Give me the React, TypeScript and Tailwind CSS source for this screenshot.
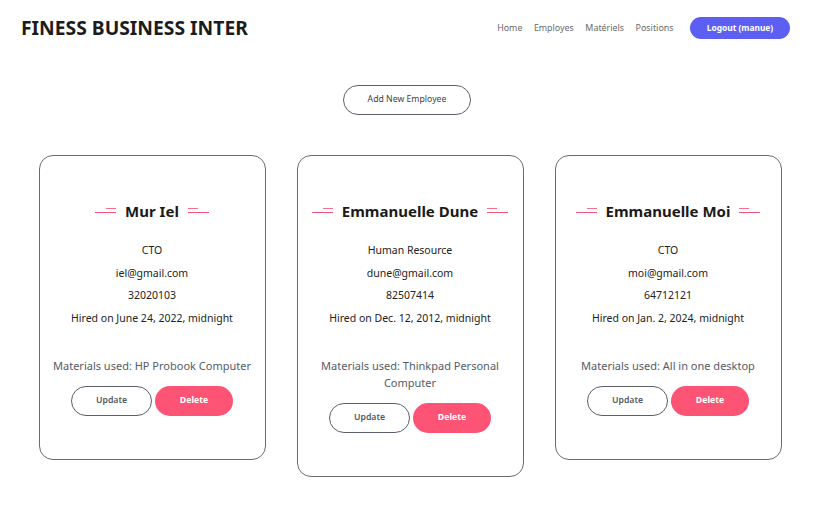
import React from "react";

type Employee = {
  name: string;
  position: string;
  email: string;
  phone: string;
  hired: string;
  materials: string;
};

const employees: Employee[] = [
  {
    name: "Mur Iel",
    position: "CTO",
    email: "iel@gmail.com",
    phone: "32020103",
    hired: "Hired on June 24, 2022, midnight",
    materials: "Materials used: HP Probook Computer",
  },
  {
    name: "Emmanuelle Dune",
    position: "Human Resource",
    email: "dune@gmail.com",
    phone: "82507414",
    hired: "Hired on Dec. 12, 2012, midnight",
    materials: "Materials used: Thinkpad Personal Computer",
  },
  {
    name: "Emmanuelle Moi",
    position: "CTO",
    email: "moi@gmail.com",
    phone: "64712121",
    hired: "Hired on Jan. 2, 2024, midnight",
    materials: "Materials used: All in one desktop",
  },
];

function Dash({ flip }: { flip?: boolean }) {
  // little double stroke next to the name
  return (
    <div className={`flex h-[6px] w-[21px] flex-col gap-[3px] ${flip ? "items-start" : "items-end"}`}>
      <span className="h-px w-[10px] bg-[#f5708c]" />
      <span className="h-px w-[21px] bg-[#f0547a]" />
    </div>
  );
}

function EmployeeCard({ e }: { e: Employee }) {
  return (
    <div className="flex w-[227px] flex-col items-center rounded-[14px] border border-[#6b6b6b] px-[12px] pt-[45px] pb-[43px] text-center">
      <div className="flex h-[20px] items-center gap-[9px]">
        <Dash />
        <h2 className="text-[15px] leading-[20px] font-bold text-[#1a1a1a]">{e.name}</h2>
        <Dash flip />
      </div>
      <div className="mt-[18px] flex flex-col text-[10.5px] leading-[22.5px] text-[#222]">
        <p>{e.position}</p>
        <p>{e.email}</p>
        <p>{e.phone}</p>
        <p>{e.hired}</p>
      </div>
      <p className="mt-[28px] text-[11px] leading-[17px] text-[#555b66]">{e.materials}</p>
      <div className="mt-[12px] flex gap-[3px]">
        <button className="h-[30px] w-[81px] rounded-full border border-[#5a5f69] text-[8.7px] font-semibold text-[#555b66]">
          Update
        </button>
        <button className="h-[30px] w-[78px] rounded-full bg-[#fd5374] text-[8.7px] font-bold text-white">
          Delete
        </button>
      </div>
    </div>
  );
}

export default function App() {
  return (
    <div className="min-h-screen bg-white font-['Noto_Sans','Open_Sans',sans-serif]">
      <header className="flex items-center justify-between pl-[21px] pr-[24px] pt-[16px]">
        <h1 className="text-[19.3px] leading-[24px] font-bold text-[#1c1c1c]">
          FINESS BUSINESS INTER
        </h1>
        <nav className="flex items-center gap-[11.5px] text-[8.9px] text-[#6a6a6a]">
          <a>Home</a>
          <a>Employes</a>
          <a>Matériels</a>
          <a>Positions</a>
          <button className="ml-[5px] h-[22px] w-[100px] rounded-full bg-[#5c5ff2] text-[8.4px] font-bold text-white">
            Logout (manue)
          </button>
        </nav>
      </header>

      <div className="mt-[45px] flex justify-center">
        <button className="h-[30px] w-[128px] rounded-full border border-[#5a5f69] text-[8.7px] text-[#444]">
          Add New Employee
        </button>
      </div>

      <div className="mt-[40px] flex items-start justify-center gap-[31px] pl-[6px]">
        {employees.map((e) => (
          <EmployeeCard key={e.name} e={e} />
        ))}
      </div>
    </div>
  );
}
